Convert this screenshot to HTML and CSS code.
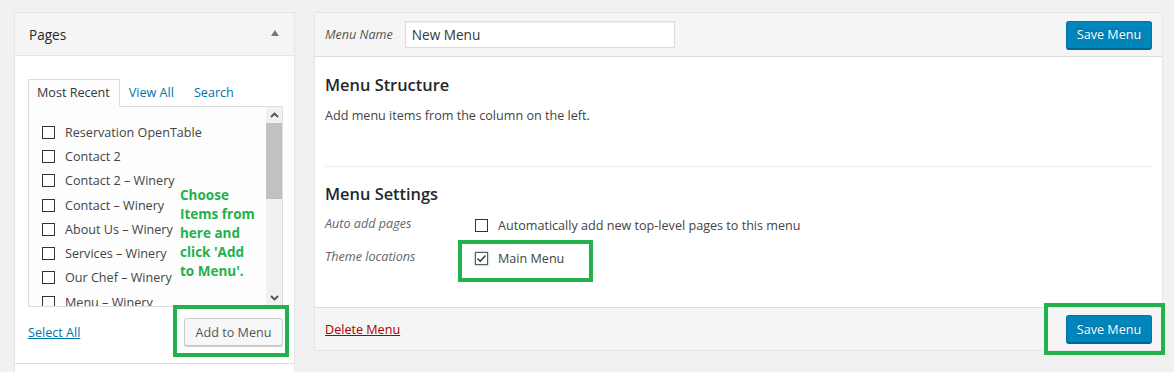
FILE: index.html
```html
<!DOCTYPE html>
<html lang="en">
  <head>
    <meta charset="UTF-8" />
    <meta name="viewport" content="width=device-width, initial-scale=1.0" />
    <title>Menus</title>
    <link rel="stylesheet" href="styles.css">
  </head>
  <body>
    <div class="page">
      <div class="sidebar">
        <div class="box">
          <div class="box-head">
            <h3>Pages</h3>
            <span class="toggle"></span>
          </div>
          <div class="box-body">
            <ul class="tabs">
              <li class="active">Most Recent</li>
              <li><a href="#">View All</a></li>
              <li><a href="#">Search</a></li>
            </ul>
            <div class="list-wrap">
              <ul class="checklist">
                <li><span class="cb"></span>Reservation OpenTable</li>
                <li><span class="cb"></span>Contact 2</li>
                <li><span class="cb"></span>Contact 2 – Winery</li>
                <li><span class="cb"></span>Contact – Winery</li>
                <li><span class="cb"></span>About Us – Winery</li>
                <li><span class="cb"></span>Services – Winery</li>
                <li><span class="cb"></span>Our Chef – Winery</li>
                <li><span class="cb"></span>Menu – Winery</li>
              </ul>
              <div class="scrollbar">
                <div class="sb-arrow">
                  <svg width="9" height="6" viewBox="0 0 9 6"><path d="M1 5 L4.5 1.5 L8 5" fill="none" stroke="#505050" stroke-width="1.8"/></svg>
                </div>
                <div class="sb-thumb"></div>
                <div class="sb-track"></div>
                <div class="sb-arrow">
                  <svg width="9" height="6" viewBox="0 0 9 6"><path d="M1 1 L4.5 4.5 L8 1" fill="none" stroke="#505050" stroke-width="1.8"/></svg>
                </div>
              </div>
            </div>
            <div class="box-foot">
              <a href="#">Select All</a>
              <button type="button" class="button">Add to Menu</button>
            </div>
          </div>
          <div class="box-next"></div>
        </div>
      </div>

      <div class="editor">
        <div class="editor-head">
          <label>Menu Name</label>
          <input type="text" value="New Menu" />
          <button type="button" class="button-primary">Save Menu</button>
        </div>
        <div class="editor-body">
          <div class="structure">
            <h3>Menu Structure</h3>
            <p>Add menu items from the column on the left.</p>
          </div>
          <div class="settings">
            <h3>Menu Settings</h3>
            <div class="setting-row">
              <span class="setting-label">Auto add pages</span>
              <span class="cb"></span>
              <span>Automatically add new top-level pages to this menu</span>
            </div>
            <div class="setting-row">
              <span class="setting-label">Theme locations</span>
              <span class="cb checked">
                <svg width="11" height="11" viewBox="0 0 11 11"><path d="M1.5 5.5 L4.2 8.2 L9.5 2.5" fill="none" stroke="#333" stroke-width="1.4"/></svg>
              </span>
              <span>Main Menu</span>
            </div>
          </div>
        </div>
        <div class="editor-foot">
          <a href="#" class="delete">Delete Menu</a>
          <button type="button" class="button-primary">Save Menu</button>
        </div>
      </div>

      <!-- annotations drawn over the screenshot -->
      <div class="note">Choose<br />Items from<br />here and<br />click 'Add<br />to Menu'.</div>
      <div class="mark mark-add"></div>
      <div class="mark mark-theme"></div>
      <div class="mark mark-save"></div>
    </div>
  </body>
</html>
```

FILE: styles.css
```css
body {
  margin: 0;
  background-color: #f1f1f1;
  font-family: "Open Sans", "Liberation Sans", sans-serif;
  font-size: 12.6px;
  color: #444;
}
.page {
  position: relative;
  display: flex;
  align-items: flex-start;
  padding: 12px 0 0 14px;
  height: 360px;
  overflow: hidden;
}
a {
  color: #0073aa;
}
.sidebar {
  width: 281px;
  flex-shrink: 0;
}
.box {
  background: #fff;
  border: 1px solid #e5e5e5;
}
.box-head {
  height: 42px;
  display: flex;
  align-items: center;
  justify-content: space-between;
  padding: 0 15px 0 14px;
  background: #f5f5f5;
  border-bottom: 1px solid #e5e5e5;
}
.box-head h3 {
  margin: 0;
  font-size: 13.6px;
  font-weight: 400;
  color: #23282d;
}
.toggle {
  width: 0;
  height: 0;
  border-left: 4px solid transparent;
  border-right: 4px solid transparent;
  border-bottom: 6px solid #72777c;
  margin-top: -2px;
}
.box-body {
  padding: 23px 11px 0 13px;
}
.tabs {
  list-style: none;
  margin: 0;
  padding: 0;
  display: flex;
}
.tabs li {
  height: 26px;
  line-height: 26px;
  padding: 0 9px 0 8px;
  border: 1px solid transparent;
  border-bottom: none;
}
.tabs li a {
  text-decoration: none;
}
.tabs li.active {
  background: #fdfdfd;
  border-color: #ddd;
  color: #32373c;
  position: relative;
  margin-bottom: -1px;
  height: 27px;
}
.tabs li + li {
  padding-left: 8px;
  padding-right: 10px;
}
.list-wrap {
  height: 199px;
  border: 1px solid #ddd;
  background: #fdfdfd;
  display: flex;
}
.checklist {
  flex: 1;
  list-style: none;
  margin: 0;
  padding: 13px 0 0 13px;
  overflow: hidden;
}
.checklist li {
  height: 24.3px;
  flex-shrink: 0;
  display: flex;
  align-items: center;
  gap: 10px;
  color: #444;
  white-space: nowrap;
}
.cb {
  width: 11px;
  height: 11px;
  border: 1px solid #333;
  background: #fff;
  flex-shrink: 0;
  display: inline-flex;
  align-items: center;
  justify-content: center;
}
.cb.checked {
  box-shadow: 0 0 2px rgba(30, 140, 190, 0.8);
  border-color: #5b5b5b;
}
.scrollbar {
  width: 16px;
  background: #f1f1f1;
  display: flex;
  flex-direction: column;
}
.sb-arrow {
  height: 16px;
  display: flex;
  align-items: center;
  justify-content: center;
}
.sb-thumb {
  height: 76px;
  background: #c1c1c1;
}
.sb-track {
  flex: 1;
}
.box-foot {
  display: flex;
  align-items: center;
  justify-content: space-between;
  padding: 11px 0 17px 0;
}
.button {
  height: 28px;
  width: 99px;
  padding: 0;
  white-space: nowrap;
  font-family: inherit;
  font-size: 12.6px;
  color: #555;
  background: #f7f7f7;
  border: 1px solid #ccc;
  border-radius: 3px;
  box-shadow: 0 1px 0 #ccc;
}
.box-next {
  height: 40px;
  border-top: 1px solid #ddd;
}
.editor {
  margin-left: 19px;
  width: 847px;
  flex-shrink: 0;
  background: #fff;
  border: 1px solid #e5e5e5;
}
.editor-head {
  height: 43px;
  display: flex;
  align-items: center;
  padding: 0 10px;
  background: #f5f5f5;
  border-bottom: 1px solid #dedede;
}
.editor-head label {
  font-style: italic;
  color: #555;
  margin-right: 12px;
}
.editor-head input {
  width: 270px;
  height: 27px;
  box-sizing: border-box;
  border: 1px solid #ddd;
  padding: 0 6px;
  font-family: inherit;
  font-size: 13.6px;
  color: #32373c;
  box-shadow: inset 0 1px 2px rgba(0, 0, 0, 0.07);
}
.button-primary {
  margin-left: auto;
  width: 86px;
  height: 28px;
  padding: 0;
  font-family: inherit;
  font-size: 12.6px;
  color: #fff;
  background: #0085ba;
  border: 1px solid #0073aa;
  border-bottom-color: #006799;
  border-radius: 3px;
  box-shadow: 0 1px 0 #006799;
  text-shadow: 0 -1px 1px #006799;
}
.editor-body {
  padding: 0 10px;
}
.editor-body h3 {
  margin: 0;
  font-size: 16.4px;
  font-weight: 600;
  line-height: 24px;
  color: #23282d;
}
.structure {
  padding: 16px 0 40px;
}
.structure p {
  margin: 9px 0 0;
  line-height: 20px;
}
.settings {
  border-top: 1px solid #eee;
  padding: 15px 0 39px;
}
.setting-row {
  display: flex;
  align-items: center;
  height: 20px;
  margin-top: 13px;
}
.settings h3 + .setting-row {
  margin-top: 9px;
}
.setting-label {
  width: 150px;
  font-style: italic;
  color: #666;
  align-self: flex-start;
}
.setting-row .cb {
  margin-right: 10px;
}
.editor-foot {
  height: 42px;
  display: flex;
  align-items: center;
  padding: 0 10px;
  background: #f5f5f5;
  border-top: 1px solid #dedede;
}
.delete {
  color: #a00;
}
.note {
  position: absolute;
  left: 180px;
  top: 186px;
  font-weight: 700;
  font-size: 13.5px;
  line-height: 19px;
  color: #22b14c;
}
.mark {
  position: absolute;
  box-sizing: border-box;
  border: 4px solid #22b14c;
}
.mark-add {
  left: 173px;
  top: 305px;
  width: 116px;
  height: 52px;
}
.mark-theme {
  left: 458px;
  top: 240px;
  width: 135px;
  height: 42px;
}
.mark-save {
  left: 1044px;
  top: 303px;
  width: 121px;
  height: 52px;
}
```
